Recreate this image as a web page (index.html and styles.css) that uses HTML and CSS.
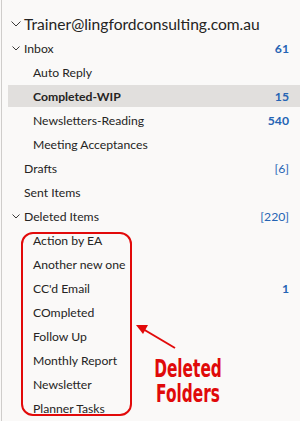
FILE: index.html
```html
<!DOCTYPE html>
<html>
<head>
<meta charset="utf-8">
<link rel="stylesheet" href="styles.css">
</head>
<body>
<div class="pane">
  <div class="account">
    <svg class="chev chev-lg" viewBox="0 0 10 6"><path d="M0.5 0.5 L5 5 L9.5 0.5" /></svg>
    <span>Trainer@lingfordconsulting.com.au</span>
  </div>
  <ul class="folders">
    <li class="row top"><svg class="chev" viewBox="0 0 8 5"><path d="M0.5 0.5 L4 4 L7.5 0.5" /></svg><span class="name">Inbox</span><span class="count bold">61</span></li>
    <li class="row sub"><span class="name">Auto Reply</span></li>
    <li class="row sub selected"><span class="name">Completed-WIP</span><span class="count bold">15</span></li>
    <li class="row sub"><span class="name">Newsletters-Reading</span><span class="count bold">540</span></li>
    <li class="row sub"><span class="name">Meeting Acceptances</span></li>
    <li class="row top"><span class="name">Drafts</span><span class="count">[6]</span></li>
    <li class="row top"><span class="name">Sent Items</span></li>
    <li class="row top"><svg class="chev" viewBox="0 0 8 5"><path d="M0.5 0.5 L4 4 L7.5 0.5" /></svg><span class="name">Deleted Items</span><span class="count">[220]</span></li>
    <li class="row sub"><span class="name">Action by EA</span></li>
    <li class="row sub"><span class="name">Another new one</span></li>
    <li class="row sub"><span class="name">CC'd Email</span><span class="count bold">1</span></li>
    <li class="row sub"><span class="name">COmpleted</span></li>
    <li class="row sub"><span class="name">Follow Up</span></li>
    <li class="row sub"><span class="name">Monthly Report</span></li>
    <li class="row sub"><span class="name">Newsletter</span></li>
    <li class="row sub"><span class="name">Planner Tasks</span></li>
  </ul>
  <div class="callout-box"></div>
  <svg class="arrow" viewBox="0 0 50 30" width="50" height="30">
    <line x1="42" y1="26" x2="10" y2="7" />
    <path d="M3 3 L15 3 L10 12 Z" class="head" />
  </svg>
  <div class="callout-text">Deleted<br>Folders</div>
</div>
</body>
</html>
```
FILE: styles.css
```css
html, body {
  margin: 0;
  padding: 0;
  background: #faf9f8;
}
.pane {
  position: relative;
  width: 300px;
  height: 421px;
  overflow: hidden;
  border-left: 1px solid #cfcdcb;
  margin-left: 1px;
  box-sizing: border-box;
  padding-top: 12px;
  font-family: "Lato", "Noto Sans", sans-serif;
  color: #252423;
}
.account {
  height: 24px;
  display: flex;
  align-items: center;
  font-size: 15.6px;
  padding-left: 9px;
}
.chev {
  fill: none;
  stroke: #3b3a39;
  stroke-width: 1;
  width: 8px;
  height: 5px;
  margin-right: 5px;
}
.chev-lg {
  width: 10px;
  height: 6px;
  margin-right: 3px;
}
.folders {
  list-style: none;
  margin: 0;
  padding: 0 0 0 6px;
}
.row {
  height: 24px;
  display: flex;
  align-items: center;
  font-size: 12.2px;
  padding-right: 12px;
}
.row.top {
  padding-left: 16px;
}
.row.top .chev {
  margin-left: -12px;
  margin-right: 4px;
}
.row.sub {
  padding-left: 25px;
}
.row.selected {
  background: #e1dfdd;
  font-weight: bold;
  height: 22px;
  margin: 1px 0;
}
.name {
  flex: 1;
  white-space: nowrap;
}
.count {
  color: #2564b4;
}
.count.bold {
  font-weight: bold;
}
.callout-box {
  position: absolute;
  left: 19px;
  top: 232px;
  width: 111px;
  height: 184px;
  border: 2px solid #e20a0a;
  border-radius: 12px;
  box-sizing: border-box;
}
.arrow {
  position: absolute;
  left: 131px;
  top: 322px;
}
.arrow line {
  stroke: #e20a0a;
  stroke-width: 2;
}
.arrow .head {
  fill: #e20a0a;
}
.callout-text {
  position: absolute;
  left: 146px;
  top: 355px;
  width: 80px;
  text-align: center;
  font-family: "DejaVu Sans Condensed", "Liberation Sans Narrow", sans-serif;
  font-weight: bold;
  font-size: 18px;
  line-height: 19px;
  color: #e00a0a;
  transform: scale(0.95, 1.35);
  transform-origin: top center;
}
```
